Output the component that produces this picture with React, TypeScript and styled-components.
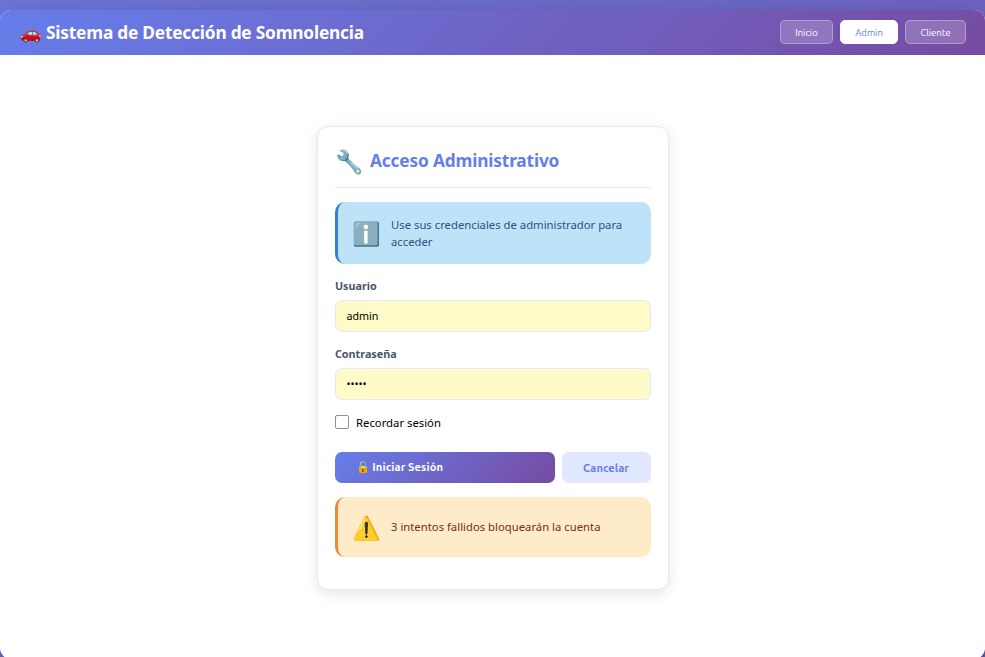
import React from "react";
import styled, { createGlobalStyle } from "styled-components";

const GlobalStyle = createGlobalStyle`
  * { box-sizing: border-box; margin: 0; padding: 0; }
  body {
    height: 657px;
    overflow: hidden;
    font-family: "Noto Sans", sans-serif;
    font-size: 11.3px;
    color: #000;
  }
`;

const brand = "linear-gradient(135deg, #667eea 0%, #764ba2 100%)";

const Page = styled.div`
  height: 657px;
  padding-top: 10px;
  overflow: hidden;
  background: linear-gradient(135deg, #6e77dc 0%, #6f68c8 50%, #7058b6 100%);
`;

const Shell = styled.div`
  height: 649px;
  border-radius: 11px;
  overflow: hidden;
  background: #fff;
  box-shadow: 0 14px 43px rgba(0, 0, 0, 0.3);
`;

const Header = styled.header`
  height: 45px;
  padding: 0 19px 0 20px;
  display: flex;
  align-items: center;
  justify-content: space-between;
  background: ${brand};
  color: #fff;
`;

const Brand = styled.h1`
  font-size: 17.3px;
  line-height: 24px;
  font-weight: 700;
  letter-spacing: -0.19px;
  word-spacing: -0.1px;
  white-space: nowrap;
`;

const Nav = styled.nav`
  display: flex;
  gap: 7px;
  margin-bottom: 2px;
`;

const NavButton = styled.button<{ $active?: boolean; $width: number }>`
  width: ${(p) => p.$width}px;
  height: 24px;
  border: 1px solid ${(p) => (p.$active ? "#fff" : "rgba(255, 255, 255, 0.3)")};
  border-radius: 5px;
  background: ${(p) => (p.$active ? "#fff" : "rgba(255, 255, 255, 0.2)")};
  color: ${(p) => (p.$active ? "#667eea" : "#fff")};
  font: 400 9.5px Ubuntu, "Noto Sans", sans-serif;
  padding-top: 1px;
`;

const Main = styled.main`
  display: flex;
  justify-content: center;
  padding-top: 71px;
`;

const Card = styled.section`
  width: 352px;
  height: 464px;
  padding: 17px;
  border: 1px solid #e0e7ff;
  border-radius: 11px;
  background: #fff;
  box-shadow: 0 4px 14px rgba(0, 0, 0, 0.1);
`;

const CardHeader = styled.div`
  height: 44px;
  display: flex;
  gap: 7.5px;
  border-bottom: 1px solid #e0e7ff;
`;

const Emoji = styled.span`
  flex: none;
  width: 28px;
  font-size: 23px;
  line-height: 34px;
  white-space: nowrap;
`;

const CardTitle = styled.h2`
  color: #667eea;
  font-size: 17.3px;
  line-height: 33px;
  font-weight: 700;
  letter-spacing: -0.16px;
`;

const Notice = styled.div<{ $tone: "info" | "warning" }>`
  height: ${(p) => (p.$tone === "info" ? 62 : 60)}px;
  margin-top: 14px;
  padding: 0 14px;
  display: flex;
  align-items: center;
  gap: 11.5px;
  border-left: 3px solid ${(p) => (p.$tone === "info" ? "#3182ce" : "#ed8936")};
  border-radius: 10px;
  background: ${(p) => (p.$tone === "info" ? "#bee3f8" : "#feebc8")};
  color: ${(p) => (p.$tone === "info" ? "#2c5282" : "#7c2d12")};
  line-height: 17px;

  p {
    padding-bottom: ${(p) => (p.$tone === "info" ? 0 : 2)}px;
  }
`;

const Field = styled.div`
  height: 54px;
  margin-top: 14px;
`;

const Label = styled.label`
  display: block;
  height: 22px;
  padding-left: 0.4px;
  line-height: 15px;
  font-size: 10.8px;
  font-weight: 700;
  color: #4a5568;
`;

const Input = styled.input`
  display: block;
  width: 100%;
  height: 32px;
  padding: 0 11px 1px;
  border: 1px solid #e0e7ff;
  border-radius: 7px;
  outline: none;
  background: #fffbc8;
  color: #000;
  font: 400 10.7px "Noto Sans", sans-serif;
`;

const Remember = styled.label`
  margin-top: 14px;
  height: 17px;
  display: flex;
  align-items: center;
  gap: 7.5px;
`;

const Checkbox = styled.input`
  appearance: none;
  width: 14px;
  height: 14px;
  margin-bottom: 2px;
  border: 1px solid #8f8f9d;
  border-radius: 2px;
  background: #fff;
`;

const Actions = styled.div`
  display: flex;
  gap: 7px;
  margin-top: 21px;
`;

const Button = styled.button<{ $primary?: boolean }>`
  ${(p) => (p.$primary ? "flex: 1;" : "width: 89px;")}
  height: 31px;
  padding: ${(p) => (p.$primary ? "0 21px 1px" : "0")};
  border: 0;
  border-radius: 7px;
  text-align: ${(p) => (p.$primary ? "left" : "center")};
  background: ${(p) => (p.$primary ? brand : "#e0e7ff")};
  color: ${(p) => (p.$primary ? "#fff" : "#667eea")};
  font: 600 11.2px Ubuntu, "Noto Sans", sans-serif;
  letter-spacing: ${(p) => (p.$primary ? "0.1px" : "0")};
`;

export default function App() {
  return (
    <>
      <GlobalStyle />
      <Page>
        <Shell>
          <Header>
            <Brand>🚗 Sistema de Detección de Somnolencia</Brand>
            <Nav>
              <NavButton $width={53}>Inicio</NavButton>
              <NavButton $width={58} $active>Admin</NavButton>
              <NavButton $width={61}>Cliente</NavButton>
            </Nav>
          </Header>
          <Main>
            <Card>
              <CardHeader>
                <Emoji>🔧</Emoji>
                <CardTitle>Acceso Administrativo</CardTitle>
              </CardHeader>
              <Notice $tone="info">
                <Emoji>ℹ️</Emoji>
                <p>Use sus credenciales de administrador para acceder</p>
              </Notice>
              <Field>
                <Label htmlFor="user">Usuario</Label>
                <Input id="user" defaultValue="admin" />
              </Field>
              <Field>
                <Label htmlFor="password">Contraseña</Label>
                <Input id="password" type="password" defaultValue="admin" />
              </Field>
              <Remember>
                <Checkbox type="checkbox" />
                <span>Recordar sesión</span>
              </Remember>
              <Actions>
                <Button $primary>🔓 Iniciar Sesión</Button>
                <Button>Cancelar</Button>
              </Actions>
              <Notice $tone="warning">
                <Emoji>⚠️</Emoji>
                <p>3 intentos fallidos bloquearán la cuenta</p>
              </Notice>
            </Card>
          </Main>
        </Shell>
      </Page>
    </>
  );
}
